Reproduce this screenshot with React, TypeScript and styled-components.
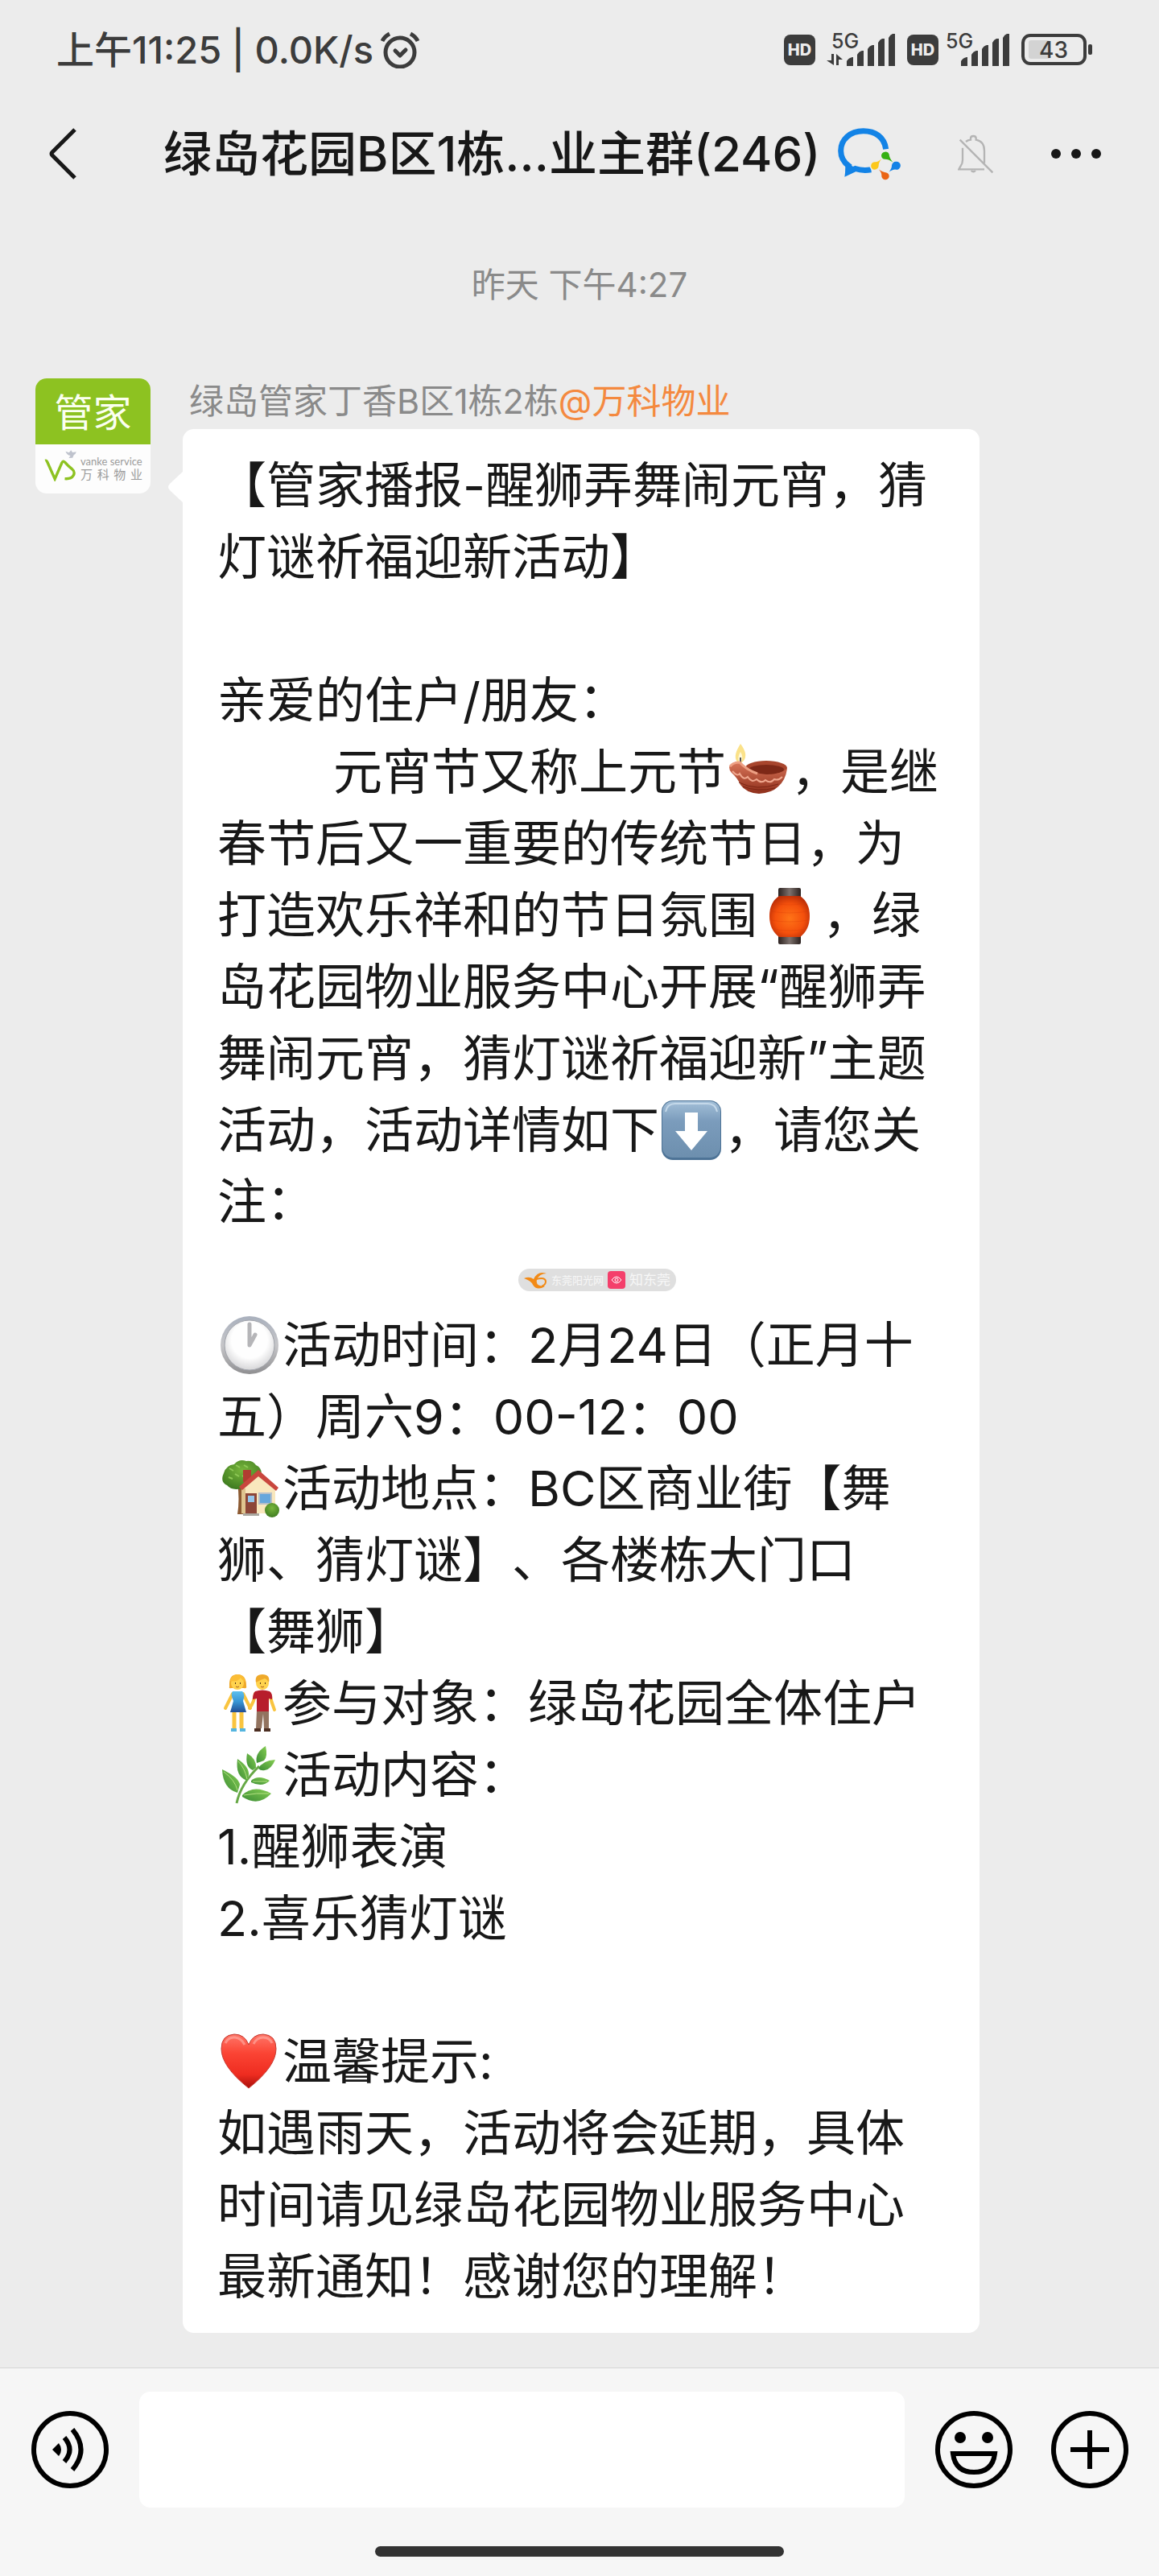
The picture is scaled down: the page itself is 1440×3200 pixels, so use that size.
import React from "react";
import styled, { createGlobalStyle } from "styled-components";

const GlobalStyle = createGlobalStyle`
  * { box-sizing: border-box; }
  body {
    margin: 0;
    background: #ececec;
    color: #181818;
    font-family: Inter, "Noto Sans CJK SC", sans-serif;
    text-spacing-trim: space-all;
  }
  button { padding: 0; border: 0; background: none; color: inherit; cursor: pointer; }
  svg { display: block; }
`;

const Page = styled.div`
  display: flex;
  flex-direction: column;
  min-height: 100vh;
`;

const StatusBar = styled.div`
  display: flex;
  align-items: center;
  justify-content: space-between;
  height: 124px;
  padding: 0 82px 0 70px;
  color: #3c3c3c;
`;

const StatusGroup = styled.div<{ $gap: number }>`
  display: flex;
  align-items: center;
  gap: ${(p) => p.$gap}px;
`;

const StatusText = styled.span`
  font-size: 47px;
  font-weight: 500;
  line-height: 60px;
  white-space: pre;
`;

const HdBadge = styled.span`
  display: flex;
  align-items: center;
  justify-content: center;
  width: 39px;
  height: 38px;
  border-radius: 8px;
  background: #3c3c3c;
  color: #ececec;
  font-size: 20px;
  font-weight: 800;
`;

const Header = styled.header`
  display: flex;
  align-items: center;
  height: 134px;
  padding: 0 72px 0 60px;
`;

const TitleGroup = styled.div`
  display: flex;
  flex: 1;
  align-items: center;
  justify-content: space-between;
  margin: 0 70px 0 107px;
`;

const Title = styled.h1`
  margin: 0;
  font-size: 60px;
  font-weight: 500;
  line-height: 80px;
  white-space: nowrap;
`;

const HeaderActions = styled.div`
  display: flex;
  align-items: center;
  gap: 72px;
`;

const Chat = styled.main`
  flex: 1;
  padding: 66px 44px 43px;
`;

const Timestamp = styled.time`
  display: block;
  margin-bottom: 86px;
  color: #8a8a8a;
  font-size: 42px;
  line-height: 60px;
  text-align: center;
`;

const Message = styled.article`
  display: flex;
  align-items: flex-start;
  gap: 40px;
  padding-right: 179px;
`;

const Avatar = styled.div`
  flex: none;
  width: 143px;
  height: 143px;
  border-radius: 14px;
  overflow: hidden;
  background: #fdfdfd;
`;

const AvatarTop = styled.div`
  height: 82px;
  background: #8dc221;
  color: #fbfff0;
  font-size: 48px;
  line-height: 86px;
  text-align: center;
`;

const AvatarBottom = styled.div`
  display: flex;
  align-items: center;
  gap: 3px;
  height: 52px;
  padding: 0 10px;
`;

const BrandText = styled.div`
  flex: 1;
  padding-top: 8px;
  color: #9a9a9a;
  font-family: Lato, "Noto Sans CJK SC", sans-serif;
  white-space: nowrap;
`;

const BrandLatin = styled.div`
  font-size: 13px;
  line-height: 14px;
`;

const BrandHan = styled.div`
  font-size: 15px;
  line-height: 18px;
  text-align-last: justify;
`;

const MessageBody = styled.div`
  flex: 1;
  min-width: 0;
`;

const Sender = styled.div`
  padding: 0 8px;
  margin-bottom: 7px;
  color: #8a8a8a;
  font-size: 43px;
  line-height: 56px;
  white-space: nowrap;
`;

const Company = styled.span`
  color: #f4893f;
`;

const Bubble = styled.div`
  position: relative;
  padding: 26px 43px 25px;
  border-radius: 14px;
  background: #fff;
`;

const BubbleTail = styled.svg`
  position: absolute;
  top: 50px;
  left: -19px;
`;

const Line = styled.p<{ $indent?: boolean }>`
  min-height: 89px;
  margin: 0;
  padding-left: ${(p) => (p.$indent ? 144 : 0)}px;
  font-size: 61px;
  line-height: 89px;
  white-space: nowrap;
`;

const EmojiSvg = styled.svg`
  display: inline-block;
  width: 74px;
  height: 74px;
  margin: 0 4px 0 3px;
  vertical-align: -15px;
`;

const WatermarkRow = styled.div`
  display: flex;
  align-items: center;
  justify-content: center;
  height: 89px;
  padding: 14px 0 0 40px;
`;

const Watermark = styled.div`
  display: flex;
  align-items: center;
  gap: 5px;
  width: 196px;
  height: 28px;
  padding: 0 6px;
  border-radius: 14px;
  background: #dfdfdf;
  color: #f7f7f7;
  line-height: 20px;
  white-space: nowrap;
`;

const WatermarkName = styled.span<{ $size: number }>`
  font-size: ${(p) => p.$size}px;
`;

const Footer = styled.footer`
  border-top: 1px solid #d5d5d5;
  background: #f6f6f6;
`;

const Composer = styled.form`
  display: flex;
  align-items: center;
  gap: 38px;
  padding: 29px 38px 48px 39px;
`;

const ComposerActions = styled.div`
  display: flex;
  gap: 48px;
`;

const MessageInput = styled.input`
  flex: 1;
  min-width: 0;
  height: 144px;
  padding: 0 36px;
  border: 0;
  border-radius: 14px;
  outline: 0;
  background: #fff;
  font: inherit;
  font-size: 61px;
`;

const HomeIndicator = styled.div`
  width: 508px;
  max-width: 60%;
  height: 13px;
  margin: 0 auto 24px;
  border-radius: 7px;
  background: #333;
`;

/* ---------- status bar drawings ---------- */

const AlarmIcon = () => (
  <svg width="50" height="46" viewBox="0 0 50 46" fill="none" stroke="#3c3c3c" strokeLinecap="round" strokeLinejoin="round">
    <circle cx="25" cy="26" r="18" strokeWidth="5" />
    <path d="M19 24l6 6 7-7" strokeWidth="5" />
    <path d="M3 12q3-6 9-9M47 12q-3-6-9-9" strokeWidth="5" strokeLinecap="butt" />
  </svg>
);

const Signal = ({ busy = false }: { busy?: boolean }) => (
  <svg width={busy ? 86 : 80} height="60" viewBox={busy ? "-6 -8 86 60" : "0 -8 80 60"} fill="#3c3c3c">
    <text x="0" y="20" fontSize="25" fontFamily="Inter" fontWeight="500">5G</text>
    {busy && <path d="M0 27h3v14L-6 35h6zM6 41V27l8 7h-5v7z" />}
    <path d="M19 42V36q2-4 7-5h1v11zM32 42V28q2-4 6-5h2v19zM45 42V21q2-4 6-5h2v26zM58 42V13q2-4 5-5h3v34zM71 42V7q2-4 5-5h3v40z" />
  </svg>
);

const Battery = () => (
  <svg width="89" height="40" viewBox="0 0 89 40">
    <rect x="2" y="2" width="77" height="35" rx="9" fill="none" stroke="#3c3c3c" strokeWidth="4" />
    <rect x="9" y="8" width="27" height="23" rx="3" fill="#d3d3d3" />
    <rect x="83" y="13" width="5" height="13" rx="2" fill="#3c3c3c" />
    <text x="40" y="30" textAnchor="middle" fontSize="28" fontFamily="Inter" fontWeight="500" fill="#3c3c3c">43</text>
  </svg>
);

/* ---------- header drawings ---------- */

const BackIcon = () => (
  <svg width="36" height="64" viewBox="0 0 36 64" fill="none" stroke="#181818" strokeWidth="5">
    <path d="M33 2L5 30q-2 2 0 4l28 28" />
  </svg>
);

const WeComIcon = () => (
  <svg width="80" height="67" viewBox="30 40 240 200" aria-label="企业微信">
    <path
      d="M212 121C206 76 172 54 128 54C78 54 44 86 44 127C44 152 56 171 74 184L71 207L98 194Q124 203 157 198"
      fill="none" stroke="#1383e6" strokeWidth="21"
    />
    <path d="M61 172l28 14 10 16-35 18q-3-1-3-4z" fill="#1383e6" />
    <circle cx="209" cy="145" r="20" fill="#ececec" />
    <circle cx="171" cy="183" r="20" fill="#ececec" />
    <path d="M195 145a15 15 0 0 1 29-4c1 10 5 19 14 29-13-8-19-11-29-11a15 15 0 0 1-14-14z" fill="#35b012" />
    <path d="M249 168a15 15 0 1 1-2 29c-9 1-15 4-23 9 7-10 10-16 10-24a15 15 0 0 1 15-14z" fill="#1383e6" />
    <path d="M224 223a14 14 0 1 1-28-3c0-9-3-15-10-23 10 7 16 10 25 11a14 14 0 0 1 13 15z" fill="#ea6414" />
    <path d="M170 198a14 14 0 1 1 2-29c9 0 15-4 24-12-8 10-11 17-11 26a15 15 0 0 1-15 15z" fill="#fcc81c" />
  </svg>
);

const MutedBellIcon = () => (
  <svg width="44" height="49" viewBox="480 60 132 147" fill="none" stroke="#b4b4b4" strokeWidth="7" aria-label="消息免打扰">
    <path d="M498 110v45q0 14-8 24l-6 11h95M510 87q7-6 18-7v-6q0-8 10-8t10 8v6q31 6 31 41v46" />
    <path d="M488 80l122 122M530 195q8 8 16 0" />
  </svg>
);

const MoreIcon = () => (
  <svg width="62" height="12" viewBox="0 0 62 12" fill="#181818">
    <circle cx="6" cy="6" r="6" />
    <circle cx="31" cy="6" r="6" />
    <circle cx="56" cy="6" r="6" />
  </svg>
);

const VankeLogo = () => (
  <svg width="43" height="40" viewBox="40 275 128 120">
    <path d="M46 318q5-2 8 5l28 63 26-60q4-10 12-2 10 12 25 24 14 12 6 25-8 14-32 12" fill="none" stroke="#8dc221" strokeWidth="10" />
    <path d="M122 283l13 5 7-9 6 8 14-2q-2 8-9 11l-5 11-14 1 6-9q-14-3-18-16z" fill="#bfc3cd" />
  </svg>
);

/* ---------- composer drawings ---------- */

const CircleIcon = ({ children }: { children: React.ReactNode }) => (
  <svg width="96" height="96" viewBox="0 0 96 96" fill="none" stroke="#000" strokeWidth="6">
    <circle cx="48" cy="48" r="45" />
    {children}
  </svg>
);

/* ---------- emoji ---------- */

const LampEmoji = () => (
  <EmojiSvg viewBox="0 0 74 74" role="img" aria-label="油灯">
    <defs>
      <linearGradient id="lamp-bowl" x1="0" y1="0" x2="0" y2="1">
        <stop offset="0" stopColor="#d9765a" />
        <stop offset="1" stopColor="#8f2f1b" />
      </linearGradient>
    </defs>
    <path d="M15 2q10 13 4 21-5 5-9 0-4-7 5-21z" fill="#fbe28a" />
    <path d="M15 12q4 6 1 12h-3q-2-6 2-12z" fill="#fff8d8" />
    <path d="M15 19v8" stroke="#555" strokeWidth="2" />
    <ellipse cx="47" cy="32" rx="26" ry="9" fill="#a8452d" />
    <ellipse cx="47" cy="34" rx="22" ry="6" fill="#7d2817" />
    <path d="M1 31q2-7 13-7 8 10 25 15 20 4 34-6-2 14-11 22-8 8-24 9-16-1-23-11-4-9-11-15-3-3-3-7z" fill="url(#lamp-bowl)" />
    <path d="M5 36q6 7 9 3 5 9 10 4 5 8 11 3 6 6 11 1 6 5 11-1 5 2 10-3" fill="none" stroke="#efa78e" strokeWidth="2" />
    <path d="M13 50q22 11 49 2M18 55q18 7 40 2" fill="none" stroke="#7b2615" strokeWidth="1" />
    <path d="M2 30q4-5 12-5 8 9 22 14" fill="none" stroke="#eda084" strokeWidth="3" />
  </EmojiSvg>
);

const LanternEmoji = () => (
  <EmojiSvg viewBox="0 0 74 74" role="img" aria-label="灯笼">
    <defs>
      <radialGradient id="lantern-glow" cx="0.5" cy="0.55" r="0.6">
        <stop offset="0" stopColor="#ff7417" />
        <stop offset="0.6" stopColor="#f4500c" />
        <stop offset="1" stopColor="#b52a06" />
      </radialGradient>
      <linearGradient id="lantern-cap">
        <stop offset="0" stopColor="#2b211f" />
        <stop offset="0.5" stopColor="#7d716d" />
        <stop offset="1" stopColor="#2b211f" />
      </linearGradient>
    </defs>
    <rect x="23" y="3" width="28" height="13" rx="2" fill="url(#lantern-cap)" />
    <rect x="23" y="61" width="28" height="12" rx="2" fill="url(#lantern-cap)" />
    <path d="M24 13h26q12 8 12 25T50 64H24Q12 55 12 38t12-25z" fill="url(#lantern-glow)" />
    <path d="M17 22q20 4 40 0M13 32q24 4 48 0M13 43q24 4 48 0M17 54q20 4 40 0" fill="none" stroke="#d83d08" strokeWidth="1" opacity="0.3" />
  </EmojiSvg>
);

const ArrowEmoji = () => (
  <EmojiSvg viewBox="0 0 74 74" role="img" aria-label="向下">
    <defs>
      <linearGradient id="arrow-face" x1="0" y1="0" x2="0" y2="1">
        <stop offset="0" stopColor="#a3bfd8" />
        <stop offset="0.35" stopColor="#7b9cbc" />
        <stop offset="1" stopColor="#6d8fae" />
      </linearGradient>
    </defs>
    <rect width="74" height="74" rx="14" fill="#4d7396" />
    <rect x="1" y="1" width="72" height="70" rx="13" fill="url(#arrow-face)" />
    <path d="M5 14q2-10 12-10h40q10 0 12 10" fill="none" stroke="#c4d8e9" strokeWidth="2" />
    <path d="M29 15h16v23h12L37 62 17 38h12z" fill="#fff" />
  </EmojiSvg>
);

const ClockEmoji = () => (
  <EmojiSvg viewBox="0 0 74 74" role="img" aria-label="时钟">
    <defs>
      <linearGradient id="clock-rim" x1="0" y1="0" x2="0" y2="1">
        <stop offset="0" stopColor="#a9b0bd" />
        <stop offset="0.5" stopColor="#c6c6c9" />
        <stop offset="1" stopColor="#8f8f91" />
      </linearGradient>
      <radialGradient id="clock-face" cx="0.5" cy="0.4" r="0.6">
        <stop offset="0.6" stopColor="#fefefe" />
        <stop offset="1" stopColor="#d6d6d8" />
      </radialGradient>
    </defs>
    <circle cx="37" cy="37" r="36" fill="url(#clock-rim)" />
    <circle cx="37" cy="37" r="31" fill="url(#clock-face)" stroke="#a0a3aa" strokeWidth="1" />
    <path d="M37 11v26l7-13" fill="none" stroke="#b5b5b8" strokeWidth="5" strokeLinejoin="round" strokeLinecap="round" />
  </EmojiSvg>
);

const HouseEmoji = () => (
  <EmojiSvg viewBox="0 0 74 74" role="img" aria-label="房子">
    <defs>
      <radialGradient id="tree-crown" cx="0.5" cy="0.35" r="0.65">
        <stop offset="0" stopColor="#78b63c" />
        <stop offset="1" stopColor="#3f7c20" />
      </radialGradient>
    </defs>
    <path d="M22 30h7v39h-7q3-18 0-39z" fill="#8c5a32" />
    <path d="M5 18Q8 8 18 7 24 0 33 3q8-1 12 5 7 3 7 11 1 12-12 14-5 6-13 4-12 3-18-4-9-4-4-15z" fill="url(#tree-crown)" />
    <path d="M12 12l5 3M20 8l5 3M30 8l5 3M11 23l5 2M19 19l5 3M28 21l4 3" stroke="#8fc957" strokeWidth="2" />
    <rect x="29" y="14" width="10" height="15" fill="#b13c31" />
    <path d="M27 37l23-20 19 19v32H27z" fill="#f9e7bd" />
    <path d="M27 37h5v31h-5z" fill="#dfc48f" />
    <path d="M24 35l24-21 25 22-3 4-22-18-20 17z" fill="#c9463d" />
    <rect x="32" y="43" width="14" height="25" fill="#8d4638" />
    <rect x="35" y="46" width="8" height="8" fill="#97c6ea" />
    <rect x="49" y="43" width="15" height="13" fill="#66a7dc" stroke="#b7bfc8" strokeWidth="2" />
    <path d="M29 68h20v3H29z" fill="#aaa79f" />
    <circle cx="65" cy="64" r="9" fill="url(#tree-crown)" />
  </EmojiSvg>
);

const CoupleEmoji = () => (
  <EmojiSvg viewBox="0 0 74 74" role="img" aria-label="手拉手">
    <defs>
      <linearGradient id="dress" x1="0" y1="0" x2="0" y2="1">
        <stop offset="0" stopColor="#5cc0ef" />
        <stop offset="0.5" stopColor="#3795d4" />
        <stop offset="1" stopColor="#234d93" />
      </linearGradient>
    </defs>
    <path d="M12 16Q11 1 22 1t11 14q1 4-3 3H14q-3 1-2-2z" fill="#efa92a" />
    <circle cx="22" cy="12" r="8" fill="#ffd34e" />
    <path d="M13 9q9 2 13-4 3 5 6 5-2-9-10-9-8 1-9 8z" fill="#fbbd35" />
    <path d="M16 25L7 43M29 25l9 18" stroke="#f9c43f" strokeWidth="4" strokeLinecap="round" />
    <path d="M18 43v25M27 43v25" stroke="#f9c43f" strokeWidth="5" />
    <path d="M16 22h12q4 3 1 12l4 14H13l4-14q-4-9-1-12z" fill="url(#dress)" />
    <path d="M14 68h7v4h-7zM25 68h7v4h-7z" fill="#55b5df" />
    <circle cx="53" cy="12" r="8" fill="#ffd34e" />
    <path d="M45 11q-2-10 8-10t8 10q-2-4-5-5-6 2-11 5z" fill="#efa92a" />
    <path d="M44 25q-1 10-7 18M62 25q2 10 6 20" fill="none" stroke="#f9c43f" strokeWidth="4" strokeLinecap="round" />
    <path d="M46 46h15v22h-6l-1-18-2 18h-7z" fill="#92735f" />
    <path d="M44 22q9-3 18 0 4 3 3 10l-4-1v16H46V31l-5 1q0-7 3-10z" fill="#b71d2c" />
    <path d="M43 68h8v4h-8zM55 68h8v4h-8z" fill="#4c2e22" />
    <path d="M19 12h1M25 12h1M50 12h1M56 12h1" stroke="#523419" strokeWidth="2" />
    <path d="M20 16q2 2 4 0M51 16q2 2 4 0" fill="none" stroke="#a75d22" />
  </EmojiSvg>
);

const HerbEmoji = () => (
  <EmojiSvg viewBox="0 0 74 74" role="img" aria-label="绿叶">
    <defs>
      <linearGradient id="leaf" x1="1" y1="0" x2="0" y2="1">
        <stop offset="0" stopColor="#86ce52" />
        <stop offset="1" stopColor="#3b8c35" />
      </linearGradient>
    </defs>
    <path d="M21 72q5-24 28-46" fill="none" stroke="#67a846" strokeWidth="3" />
    <g fill="url(#leaf)">
      <path d="M57 1q3 13-2 18-5 2-9 3-3-12 11-21z" />
      <path d="M34 10q12 7 11 18l-4 3q-10-4-7-21z" />
      <path d="M69 18q-5 12-13 13-5 1-8-2 5-10 21-11z" />
      <path d="M22 17q15 10 14 20l-2 7Q19 39 22 17z" />
      <path d="M39 44q9-8 23 0-9 9-23 2z" />
      <path d="M3 30q21 10 22 19l-3 10Q4 54 3 30z" />
      <path d="M28 62q14-14 36-2-16 17-36 4z" />
    </g>
    <path d="M5 33q14 10 17 23M23 20q8 8 11 22M30 62q16-3 31-2M41 45h18" fill="none" stroke="#b2df80" strokeWidth="1" />
  </EmojiSvg>
);

const HeartEmoji = () => (
  <EmojiSvg viewBox="0 0 74 74" role="img" aria-label="爱心">
    <defs>
      <linearGradient id="heart" x1="0" y1="0" x2="0" y2="1">
        <stop offset="0" stopColor="#ff7668" />
        <stop offset="0.35" stopColor="#fb4434" />
        <stop offset="0.75" stopColor="#ee2c20" />
        <stop offset="1" stopColor="#a80f0a" />
      </linearGradient>
    </defs>
    <path d="M36 70Q2 43 2 21 2 4 18 3q13 0 18 13Q41 3 54 3q16 1 16 18 0 22-34 49z" fill="url(#heart)" stroke="#c53930" strokeWidth="1" />
    <path d="M7 14q4-8 12-7 8 1 12 9M42 15q4-8 12-8 8 0 11 7" fill="none" stroke="#ffb1a8" strokeWidth="3" opacity="0.6" />
  </EmojiSvg>
);

const SourceMark = () => (
  <Watermark>
    <svg width="30" height="24" viewBox="0 0 30 24" fill="none">
      <path d="M1 10q7-3 12 1Q18 0 29 4q-9 0-12 8-2 8 10 8-10 6-15-2-2-5-11-8z" fill="#f28a16" />
      <path d="M16 11q12-3 12 3 0 4-5 6" stroke="#f28a16" strokeWidth="2" />
    </svg>
    <WatermarkName $size={13}>东莞阳光网</WatermarkName>
    <svg width="22" height="22" viewBox="0 0 22 22" fill="none" stroke="#fff">
      <rect width="22" height="22" rx="4" fill="#f43f6b" stroke="none" />
      <path d="M5 11q6-8 12 0-6 8-12 0z" />
      <circle cx="11" cy="11" r="2" />
    </svg>
    <WatermarkName $size={17}>知东莞</WatermarkName>
  </Watermark>
);

export default function App() {
  return (
    <Page lang="zh-CN">
      <GlobalStyle />
      <StatusBar>
        <StatusGroup $gap={8}>
          <StatusText>上午11:25 | 0.0K/s</StatusText>
          <AlarmIcon />
        </StatusGroup>
        <StatusGroup $gap={14}>
          <HdBadge>HD</HdBadge>
          <Signal busy />
          <StatusGroup $gap={9}>
            <HdBadge>HD</HdBadge>
            <Signal />
          </StatusGroup>
          <Battery />
        </StatusGroup>
      </StatusBar>

      <Header>
        <button type="button" aria-label="返回"><BackIcon /></button>
        <TitleGroup>
          <Title>绿岛花园B区1栋...业主群(246)</Title>
          <WeComIcon />
        </TitleGroup>
        <HeaderActions>
          <MutedBellIcon />
          <button type="button" aria-label="更多"><MoreIcon /></button>
        </HeaderActions>
      </Header>

      <Chat>
        <Timestamp>昨天 下午4:27</Timestamp>
        <Message>
          <Avatar>
            <AvatarTop>管家</AvatarTop>
            <AvatarBottom>
              <VankeLogo />
              <BrandText>
                <BrandLatin>vanke service</BrandLatin>
                <BrandHan>万科物业</BrandHan>
              </BrandText>
            </AvatarBottom>
          </Avatar>
          <MessageBody>
            <Sender>
              绿岛管家丁香B区1栋2栋<Company>@万科物业</Company>
            </Sender>
            <Bubble>
              <BubbleTail width="20" height="44" viewBox="0 0 20 44">
                <path d="M20 2L3 18q-4 4 0 8l17 16z" fill="#fff" />
              </BubbleTail>
              <Line>【管家播报-醒狮弄舞闹元宵，猜</Line>
              <Line>灯谜祈福迎新活动】</Line>
              <Line />
              <Line>亲爱的住户/朋友：</Line>
              <Line $indent>元宵节又称上元节<LampEmoji />，是继</Line>
              <Line>春节后又一重要的传统节日，为</Line>
              <Line>打造欢乐祥和的节日氛围<LanternEmoji />，绿</Line>
              <Line>岛花园物业服务中心开展“醒狮弄</Line>
              <Line>舞闹元宵，猜灯谜祈福迎新”主题</Line>
              <Line>活动，活动详情如下<ArrowEmoji />，请您关</Line>
              <Line>注：</Line>
              <WatermarkRow><SourceMark /></WatermarkRow>
              <Line><ClockEmoji />活动时间：2月24日（正月十</Line>
              <Line>五）周六9：00-12：00</Line>
              <Line><HouseEmoji />活动地点：BC区商业街【舞</Line>
              <Line>狮、猜灯谜】、各楼栋大门口</Line>
              <Line>【舞狮】</Line>
              <Line><CoupleEmoji />参与对象：绿岛花园全体住户</Line>
              <Line><HerbEmoji />活动内容：</Line>
              <Line>1.醒狮表演</Line>
              <Line>2.喜乐猜灯谜</Line>
              <Line />
              <Line><HeartEmoji />温馨提示:</Line>
              <Line>如遇雨天，活动将会延期，具体</Line>
              <Line>时间请见绿岛花园物业服务中心</Line>
              <Line>最新通知！感谢您的理解！</Line>
            </Bubble>
          </MessageBody>
        </Message>
      </Chat>

      <Footer>
        <Composer>
          <button type="button" aria-label="语音">
            <CircleIcon>
              <path d="M26 48l8-8q6 8 0 16z" fill="#000" stroke="none" />
              <path d="M41 33q13 15 0 30M51 23q21 25 0 50" />
            </CircleIcon>
          </button>
          <MessageInput type="text" aria-label="消息" />
          <ComposerActions>
            <button type="button" aria-label="表情">
              <CircleIcon>
                <circle cx="31" cy="33" r="7" fill="#000" stroke="none" />
                <circle cx="65" cy="33" r="7" fill="#000" stroke="none" />
                <path d="M22 53h52q-3 23-26 23T22 53z" />
              </CircleIcon>
            </button>
            <button type="button" aria-label="更多功能">
              <CircleIcon>
                <path d="M48 24v48M24 48h48" />
              </CircleIcon>
            </button>
          </ComposerActions>
        </Composer>
        <HomeIndicator />
      </Footer>
    </Page>
  );
}
